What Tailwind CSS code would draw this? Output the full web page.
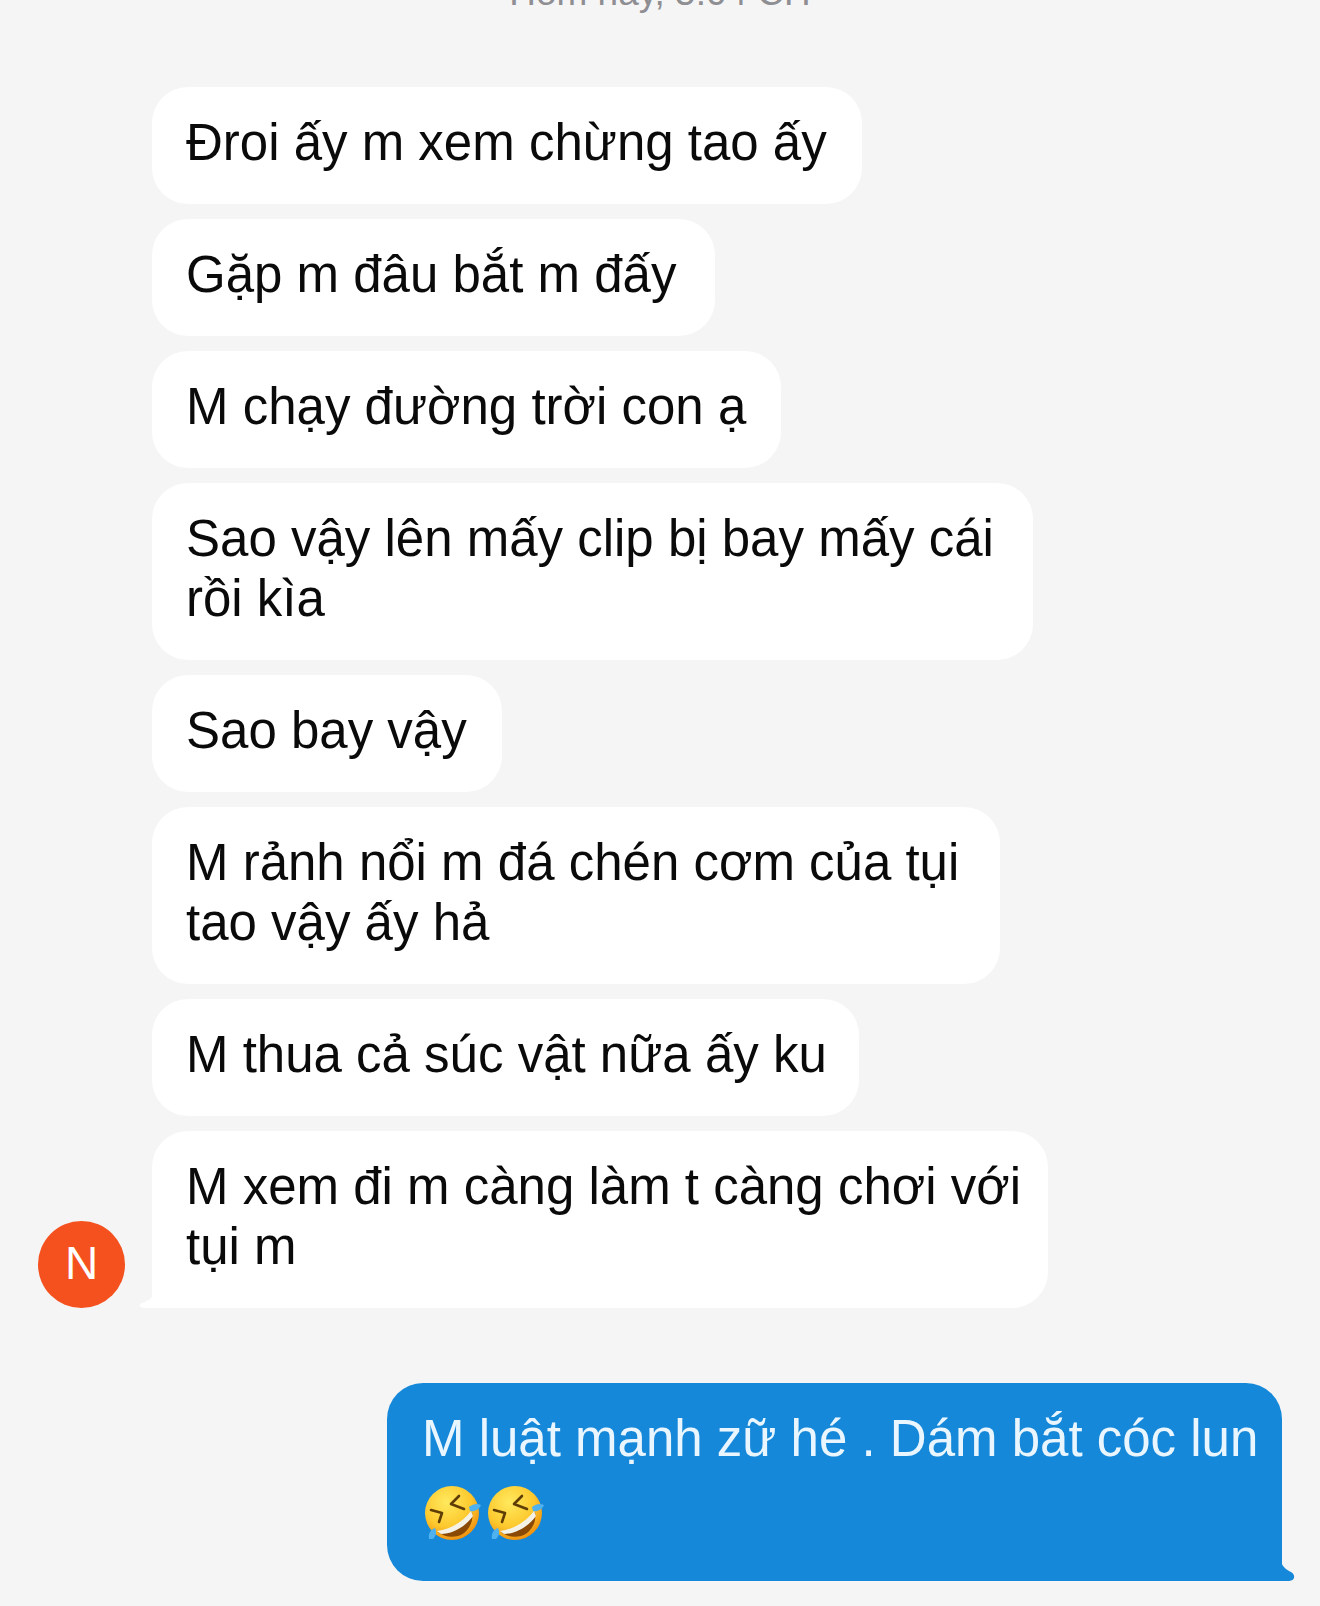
<!DOCTYPE html>
<html lang="en">
<head>
    <meta charset="UTF-8">
    <title>Messages</title>
    <script src="https://cdn.jsdelivr.net/npm/@tailwindcss/browser@4"></script>
</head>
<body class="bg-[#f5f5f5] font-['Liberation_Sans',sans-serif] text-[51px] leading-[60px] text-[#0a0a0a] overflow-hidden">
    <div class="w-[1320px] h-[1606px] flex flex-col overflow-hidden">
        <!-- Timestamp, cut off by the top of the screenshot -->
        <div class="h-[87px] flex justify-center">
            <p class="text-[37px] leading-[40px] mt-[-27px] text-[#8e8e93]">Hôm nay, 5:04 CH</p>
        </div>

        <!-- Incoming messages -->
        <div class="flex gap-[27px] pl-[38px]">
            <div class="w-[87px] shrink-0 flex items-end">
                <div class="w-[87px] h-[87px] pb-[3px] rounded-full bg-[#f4511e] flex items-center justify-center text-white text-[46px]">N</div>
            </div>
            <div class="flex flex-col items-start gap-[15px]">
                <div class="w-[710px] h-[117px] pl-[34px] pt-[26px] bg-white rounded-[36px] whitespace-nowrap">Đroi ấy m xem chừng tao ấy</div>
                <div class="w-[563px] h-[117px] pl-[34px] pt-[26px] bg-white rounded-[36px] whitespace-nowrap">Gặp m đâu bắt m đấy</div>
                <div class="w-[629px] h-[117px] pl-[34px] pt-[26px] bg-white rounded-[36px] whitespace-nowrap">M chạy đường trời con ạ</div>
                <div class="w-[881px] h-[177px] pl-[34px] pt-[26px] bg-white rounded-[36px] whitespace-nowrap">Sao vậy lên mấy clip bị bay mấy cái<br>rồi kìa</div>
                <div class="w-[350px] h-[117px] pl-[34px] pt-[26px] bg-white rounded-[36px] whitespace-nowrap">Sao bay vậy</div>
                <div class="w-[848px] h-[177px] pl-[34px] pt-[26px] bg-white rounded-[36px] whitespace-nowrap">M rảnh nổi m đá chén cơm của tụi<br>tao vậy ấy hả</div>
                <div class="w-[707px] h-[117px] pl-[34px] pt-[26px] bg-white rounded-[36px] whitespace-nowrap">M thua cả súc vật nữa ấy ku</div>
                <div class="relative w-[896px] h-[177px] pl-[34px] pt-[26px] bg-white rounded-[36px] rounded-bl-none whitespace-nowrap">
                    M xem đi m càng làm t càng chơi với<br>tụi m
                    <svg class="absolute left-[-13px] bottom-0" width="14" height="14" viewBox="0 0 14 14"><path d="M14 0V14H5C1 14 -1 11 3 9C8 7 13 5 14 0Z" fill="#fff"/></svg>
                </div>
            </div>
        </div>

        <!-- Outgoing message -->
        <div class="flex justify-end pr-[38px] mt-[75px]">
            <div class="relative w-[895px] h-[198px] pl-[35px] pt-[26px] bg-[#1688d9] rounded-[36px] rounded-br-none text-[#eaf6ff] whitespace-nowrap">
                M luật mạnh zữ hé . Dám bắt cóc lun
                <div class="flex gap-[5px] mt-[15px] ml-[2px]">
                    <svg width="58" height="58" viewBox="0 0 58 58"><use href="#rofl"/></svg>
                    <svg width="58" height="58" viewBox="0 0 58 58"><use href="#rofl"/></svg>
                </div>
                <svg class="absolute right-[-13px] bottom-0" width="14" height="20" viewBox="0 0 14 20"><path d="M0 0C1 6 6 9 10 11C15 14 14 20 8 20H0Z" fill="#1688d9"/></svg>
            </div>
        </div>
    </div>

    <svg width="0" height="0" class="absolute">
        <defs>
            <radialGradient id="face" cx="0.4" cy="0.3" r="0.75">
                <stop offset="0" stop-color="#ffe95e"/>
                <stop offset="0.6" stop-color="#fdc92e"/>
                <stop offset="1" stop-color="#ee8a0c"/>
            </radialGradient>
            <g id="rofl">
                <circle cx="28" cy="29" r="27" fill="url(#face)"/>
                <path d="M14 48C28 46 40 39 48 28C50 38 44 49 34 52C26 54 19 52 14 48Z" fill="#8a4a06"/>
                <path d="M13 47C27 45 39 38 47 27L49 32C42 42 29 50 17 50Z" fill="#f4f1e6"/>
                <path d="M7 26L18 29L15 38" fill="none" stroke="#5f3d06" stroke-width="2.600" stroke-linecap="round" stroke-linejoin="round"/>
                <path d="M35 12L27 20L40 25" fill="none" stroke="#5f3d06" stroke-width="2.600" stroke-linecap="round" stroke-linejoin="round"/>
                <path d="M45 23C49 20 53 19 57 21C55 26 50 28 46 27Z" fill="#4fb1ee"/>
                <path d="M5 55C4 50 6 46 11 44C13 48 12 52 9 55Z" fill="#4fb1ee"/>
            </g>
        </defs>
    </svg>
</body>
</html>
